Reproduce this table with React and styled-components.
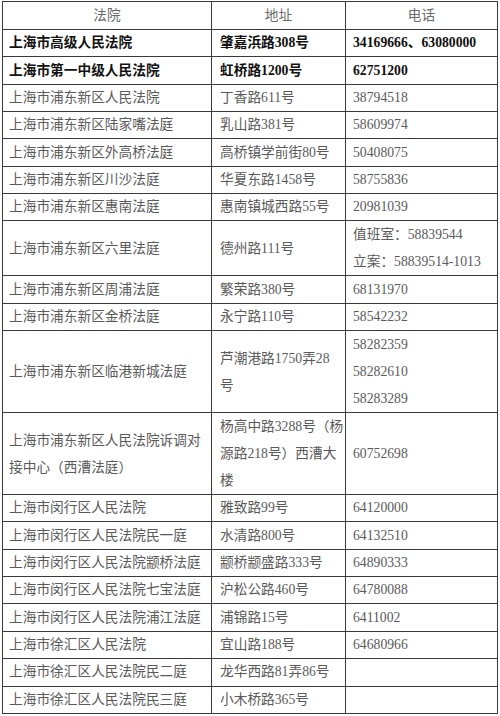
import React from "react";
import styled, { createGlobalStyle } from "styled-components";

const Global = createGlobalStyle`
  html, body { margin: 0; padding: 0; background: #fff; }
  body { font-family: "Liberation Serif", "Noto Sans CJK SC", serif; }
`;

const Page = styled.div`
  padding: 1px 0 0 2px;
`;

const Table = styled.table`
  border-collapse: collapse;
  table-layout: fixed;
  width: 495px;
  border: 1.5px solid #333;
`;

const Col = styled.col`
  width: ${(p) => p.$w}px;
`;

const HeadCell = styled.th`
  border: 1px solid #3a3a3a;
  height: 27px;
  padding: 0;
  font-weight: normal;
  font-size: 13.7px;
  color: #6a6a6a;
  text-align: center;
  vertical-align: middle;
  line-height: 27px;
`;

const Cell = styled.td`
  border: 1px solid #3a3a3a;
  padding: 0 0 0 ${(p) => p.$pad}px;
  height: ${(p) => (p.$lines ? p.$lines * 27 : 26.35)}px;
  line-height: ${(p) => (p.$tall ? 27 : 26)}px;
  font-size: 13.7px;
  white-space: nowrap;
  overflow: hidden;
  vertical-align: middle;
  color: ${(p) => (p.$bold ? "#111" : "#5a5a5a")};
  font-weight: ${(p) => (p.$bold ? 700 : 400)};
`;

const rows = [
  { court: "上海市高级人民法院", addr: "肇嘉浜路308号", tel: "34169666、63080000", bold: true },
  { court: "上海市第一中级人民法院", addr: "虹桥路1200号", tel: "62751200", bold: true },
  { court: "上海市浦东新区人民法院", addr: "丁香路611号", tel: "38794518" },
  { court: "上海市浦东新区陆家嘴法庭", addr: "乳山路381号", tel: "58609974" },
  { court: "上海市浦东新区外高桥法庭", addr: "高桥镇学前街80号", tel: "50408075" },
  { court: "上海市浦东新区川沙法庭", addr: "华夏东路1458号", tel: "58755836" },
  { court: "上海市浦东新区惠南法庭", addr: "惠南镇城西路55号", tel: "20981039" },
  { court: "上海市浦东新区六里法庭", addr: "德州路111号", tel: ["值班室：58839544", "立案：58839514-1013"], lines: 2 },
  { court: "上海市浦东新区周浦法庭", addr: "繁荣路380号", tel: "68131970" },
  { court: "上海市浦东新区金桥法庭", addr: "永宁路110号", tel: "58542232" },
  { court: "上海市浦东新区临港新城法庭", addr: ["芦潮港路1750弄28", "号"], tel: ["58282359", "58282610", "58283289"], lines: 3 },
  { court: ["上海市浦东新区人民法院诉调对", "接中心（西漕法庭）"], addr: ["杨高中路3288号（杨", "源路218号）西漕大", "楼"], tel: "60752698", lines: 3 },
  { court: "上海市闵行区人民法院", addr: "雅致路99号", tel: "64120000" },
  { court: "上海市闵行区人民法院民一庭", addr: "水清路800号", tel: "64132510" },
  { court: "上海市闵行区人民法院颛桥法庭", addr: "颛桥颛盛路333号", tel: "64890333" },
  { court: "上海市闵行区人民法院七宝法庭", addr: "沪松公路460号", tel: "64780088" },
  { court: "上海市闵行区人民法院浦江法庭", addr: "浦锦路15号", tel: "6411002" },
  { court: "上海市徐汇区人民法院", addr: "宜山路188号", tel: "64680966" },
  { court: "上海市徐汇区人民法院民二庭", addr: "龙华西路81弄86号", tel: "" },
  { court: "上海市徐汇区人民法院民三庭", addr: "小木桥路365号", tel: "" },
];

const Lines = ({ v }) =>
  Array.isArray(v)
    ? v.map((s, i) => (
        <React.Fragment key={i}>
          {i > 0 && <br />}
          {s}
        </React.Fragment>
      ))
    : v;

export default function App() {
  return (
    <Page>
      <Global />
      <Table>
        <colgroup>
          <Col $w={209} />
          <Col $w={134} />
          <Col $w={152} />
        </colgroup>
        <thead>
          <tr>
            <HeadCell>法院</HeadCell>
            <HeadCell>地址</HeadCell>
            <HeadCell>电话</HeadCell>
          </tr>
        </thead>
        <tbody>
          {rows.map((r, i) => (
            <tr key={i}>
              <Cell $pad={6} $bold={r.bold} $tall={!!r.lines} $lines={r.lines}>
                <Lines v={r.court} />
              </Cell>
              <Cell $pad={8} $bold={r.bold} $tall={!!r.lines} $lines={r.lines}>
                <Lines v={r.addr} />
              </Cell>
              <Cell $pad={7} $bold={r.bold} $tall={!!r.lines} $lines={r.lines}>
                <Lines v={r.tel} />
              </Cell>
            </tr>
          ))}
        </tbody>
      </Table>
    </Page>
  );
}
